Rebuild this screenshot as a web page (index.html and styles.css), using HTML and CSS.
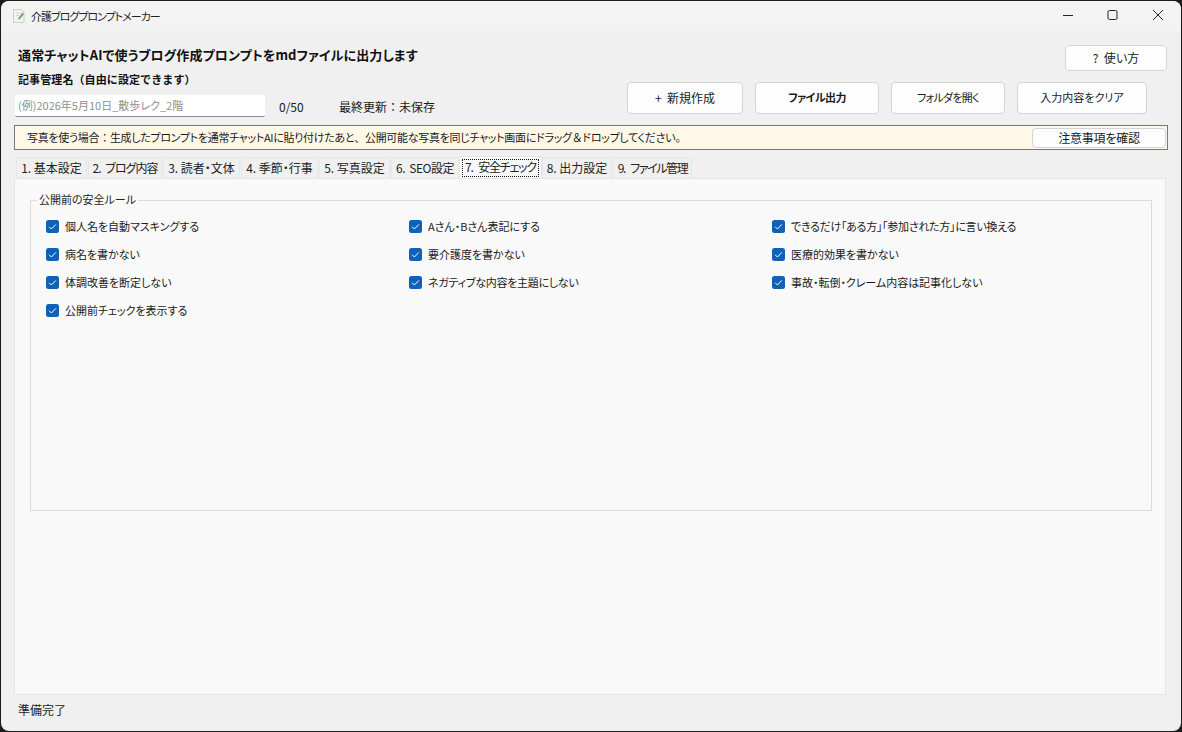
FILE: index.html
```html
<!DOCTYPE html>
<html lang="ja">
  <head>
    <meta charset="UTF-8" />
    <title>介護ブログプロンプトメーカー</title>
    <link rel="stylesheet" href="styles.css">
  </head>
  <body>
    <div class="window">
      <div class="titlebar">
        <svg class="app-icon" width="16" height="16" viewBox="0 0 16 16">
          <path d="M2.5 1.5h8l2.5 2.5v10.5h-10.5z" fill="#eef5e8" stroke="#c4d8b8" />
          <path d="M5 5h5M5 7.5h3" stroke="#d2ddcb" />
          <path d="M11.5 4.5l1.5 1.5-4 5-2 .8.6-2z" fill="#7d93a3" />
        </svg>
        <span class="app-title">介護ブログプロンプトメーカー</span>
        <div class="controls">
          <svg width="45" height="30" viewBox="0 0 45 30"><path d="M17 14.5h10" stroke="#222" /></svg>
          <svg width="45" height="30" viewBox="0 0 45 30"><rect x="17" y="9.5" width="9" height="9" rx="1.5" fill="none" stroke="#222" /></svg>
          <svg width="45" height="30" viewBox="0 0 45 30"><path d="M17 9l10 10M27 9l-10 10" stroke="#222" /></svg>
        </div>
      </div>

      <div class="content">
        <div class="header">
          <div class="header-left">
            <h1>通常チャットAIで使うブログ作成プロンプトをmdファイルに出力します</h1>
            <label>記事管理名（自由に設定できます）</label>
            <div class="name-line">
              <input type="text" placeholder="(例)2026年5月10日_散歩レク_2階" />
              <span class="count">0/50</span>
              <span class="updated">最終更新：未保存</span>
            </div>
          </div>
          <div class="header-right">
            <button class="btn help-btn">?&nbsp; 使い方</button>
            <div class="actions">
              <button class="btn w-new">+&nbsp; 新規作成</button>
              <button class="btn w-export strong">ファイル出力</button>
              <button class="btn w-folder">フォルダを開く</button>
              <button class="btn w-clear">入力内容をクリア</button>
            </div>
          </div>
        </div>

        <div class="notice">
          <span class="notice-text">写真を使う場合<span class="wide">：</span>生成したプロンプトを通常チャットAIに貼り付けたあと<span class="wide">、</span>公開可能な写真を同じチャット画面にドラッグ<span class="wide">＆</span>ドロップしてください。</span>
          <button class="btn notice-btn">注意事項を確認</button>
        </div>

        <div class="tabs">
          <div class="tab t1">1. 基本設定</div>
          <div class="tab t2">2. ブログ内容</div>
          <div class="tab t3">3. 読者・文体</div>
          <div class="tab t4">4. 季節・行事</div>
          <div class="tab t5">5. 写真設定</div>
          <div class="tab t6">6. SEO設定</div>
          <div class="tab t7 active"><span>7. 安全チェック</span></div>
          <div class="tab t8">8. 出力設定</div>
          <div class="tab t9">9. ファイル管理</div>
        </div>

        <div class="pane">
          <fieldset class="group">
            <legend>公開前の安全ルール</legend>
            <div class="rules" id="rules"></div>
          </fieldset>
        </div>

        <div class="status">準備完了</div>
      </div>
    </div>

    <script>
      const rules = [
        "個人名を自動マスキングする",
        "Aさん・Bさん表記にする",
        "できるだけ「ある方」「参加された方」に言い換える",
        "病名を書かない",
        "要介護度を書かない",
        "医療的効果を書かない",
        "体調改善を断定しない",
        "ネガティブな内容を主題にしない",
        "事故・転倒・クレーム内容は記事化しない",
        "公開前チェックを表示する",
      ];

      const box = document.getElementById("rules");
      rules.forEach((text) => {
        const row = document.createElement("div");
        row.className = "rule";
        row.innerHTML =
          '<svg width="13" height="13" viewBox="0 0 13 13"><rect width="13" height="13" rx="2.5" fill="#0f62b8" /><path d="M3.2 6.8l2.2 2.2 4.4-4.6" fill="none" stroke="#fff" /></svg>';
        const label = document.createElement("span");
        label.textContent = text;
        if (text.includes("ある方") || text.includes("ネガティブ")) {
          label.className = "tight";
        }
        row.appendChild(label);
        box.appendChild(row);
      });
    </script>
  </body>
</html>
```

FILE: styles.css
```css
html,
body {
  height: 100%;
}
body {
  margin: 0;
  background-color: #1c1c1c;
  font-family: "Noto Sans CJK JP", "Noto Sans", sans-serif;
  font-size: 12px;
  font-feature-settings: "palt";
  color: #1a1a1a;
  overflow: hidden;
}
.window {
  height: 730px;
  margin: 1px;
  border-radius: 8px;
  background-color: #f0f0f0;
  overflow: hidden;
  display: flex;
  flex-direction: column;
}
.titlebar {
  height: 30px;
  flex: none;
  background-color: #f3f3f3;
  display: flex;
  align-items: center;
  padding-left: 10px;
}
.app-icon {
  margin-right: 4px;
}
.app-title {
  font-size: 11px;
  letter-spacing: -1px;
  color: #222;
}
.controls {
  margin-left: auto;
  display: flex;
}
.controls svg {
  display: block;
}
.content {
  flex: 1;
  display: flex;
  flex-direction: column;
  padding: 0 14px 0 13px;
  min-height: 0;
}
.header {
  display: flex;
  justify-content: space-between;
  height: 94px;
  flex: none;
  padding-top: 14px;
  box-sizing: border-box;
}
h1 {
  margin: 0 0 0 4px;
  font-size: 13px;
  letter-spacing: 0.13px;
  line-height: 20px;
  font-weight: 700;
  color: #111;
}
.header-left label {
  display: block;
  margin: 5px 0 0 4px;
  font-size: 11px;
  letter-spacing: 0.1px;
  font-feature-settings: normal;
  font-weight: 700;
  line-height: 18px;
  color: #111;
}
.name-line {
  display: flex;
  align-items: center;
  margin: 7px 0 0 1px;
}
input {
  box-sizing: border-box;
  width: 250px;
  height: 22px;
  border: none;
  border-bottom: 1px solid #8a8a8a;
  border-radius: 2px;
  background-color: #fff;
  padding: 0 3px 1px;
  font-family: inherit;
  font-size: 11px;
  font-feature-settings: "palt";
  outline: none;
}
input::placeholder {
  color: #8f8f8f;
}
.count {
  margin-left: 14px;
  width: 60px;
}
.updated {
  font-feature-settings: normal;
}
.header-right {
  display: flex;
  flex-direction: column;
  align-items: flex-end;
}
.btn {
  box-sizing: border-box;
  background-color: #fdfdfd;
  border: 1px solid #d4d4d4;
  border-radius: 4px;
  font-family: inherit;
  font-size: 12px;
  font-feature-settings: "palt";
  color: #1a1a1a;
  padding: 0 0 1px;
}
.strong {
  font-weight: 700;
}
.help-btn {
  width: 102px;
  height: 26px;
}
.actions {
  display: flex;
  gap: 12px;
  margin: 11px 20px 0 0;
  height: 32px;
}
.actions .btn {
  padding-bottom: 2px;
}
.w-new {
  width: 116px;
}
.w-export {
  width: 124px;
  font-size: 11px;
  letter-spacing: -0.6px;
}
.w-folder {
  width: 114px;
  font-size: 11px;
  letter-spacing: -0.7px;
}
.w-clear {
  width: 130px;
  font-size: 11px;
}
.notice {
  box-sizing: border-box;
  height: 25px;
  flex: none;
  background-color: #fff8e6;
  border: 1px solid #777;
  display: flex;
  align-items: center;
  justify-content: space-between;
  padding: 0 1px 0 12px;
  margin: 0 -1px 0 0;
  font-size: 11px;
  letter-spacing: -0.3px;
}
.notice-text {
  padding-bottom: 2px;
}
.wide {
  font-feature-settings: normal;
}
.notice-btn {
  width: 134px;
  height: 20px;
  letter-spacing: -0.2px;
  font-size: 12px;
}
.tabs {
  display: flex;
  align-items: flex-end;
  height: 28px;
  flex: none;
  margin-left: 2px;
  gap: 1px;
}
.tab {
  box-sizing: border-box;
  height: 21px;
  background-color: #f0f0f0;
  border: 1px solid #e6e6e6;
  border-bottom: none;
  text-align: center;
  line-height: 19px;
  white-space: nowrap;
  color: #222;
}
.t1 { width: 71px; }
.t2 { width: 74px; letter-spacing: -1px; word-spacing: 3px; }
.t3 { width: 77px; }
.t4 { width: 77px; }
.t5 { width: 71px; }
.t6 { width: 68px; letter-spacing: -0.5px; word-spacing: 2px; }
.t7 { width: 83px; letter-spacing: -1.2px; word-spacing: 4px; }
.t8 { width: 70px; }
.t9 { width: 79px; letter-spacing: -1.4px; word-spacing: 4px; }
.tab.active {
  height: 22px;
  background-color: #f9f9f9;
  padding: 2px 2px 1px;
  margin: 0 -1px;
  position: relative;
  z-index: 1;
}
.tab.active span {
  display: block;
  border: 1px dotted #111;
  height: 18px;
  line-height: 14px;
  box-sizing: border-box;
}
.pane {
  box-sizing: border-box;
  flex: none;
  height: 517px;
  background-color: #f9f9f9;
  border: 1px solid #e5e5e5;
  margin: 0 1px 0 0;
  padding: 13px 13px 0 15px;
}
.group {
  box-sizing: border-box;
  height: 319px;
  margin: 0;
  border: 1px solid #dcdcdc;
  padding: 4px 15px 0;
  min-width: 0;
}
.group legend {
  padding: 0 2px 1px;
  margin-left: -9px;
  line-height: 15px;
  font-size: 11px;
  color: #222;
}
.rules {
  display: grid;
  grid-template-columns: repeat(3, 363px);
  grid-auto-rows: 28px;
}
.rule {
  display: flex;
  align-items: center;
  gap: 6px;
  font-size: 11px;
  letter-spacing: -0.02px;
  color: #1a1a1a;
}
.rule .tight {
  letter-spacing: -0.27px;
}
.status {
  margin: 6px 0 0 4px;
  line-height: 18px;
}
```
